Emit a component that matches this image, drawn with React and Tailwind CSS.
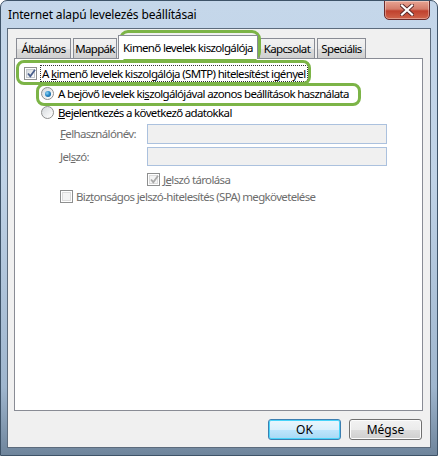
import React from "react";

const FONT = { fontFamily: '"Noto Sans", "Open Sans", sans-serif' };

function CheckBox({ checked, disabled }) {
  return (
    <span className="relative inline-block w-[13px] h-[13px] shrink-0 border border-[#8e8f8f] bg-white">
      <span
        className={
          "absolute inset-[1px] border " +
          (disabled
            ? "border-[#dcdcdc] bg-[#f4f4f4]"
            : "border-[#c3c8ce] bg-[linear-gradient(135deg,#d6dade_0%,#f3f4f5_70%,#ffffff_100%)]")
        }
      />
      {checked && (
        <svg className="absolute left-[1px] top-[0px]" width="11" height="11" viewBox="0 0 11 11">
          <path
            d="M2 5.5 L4.3 8.2 L9 1.8"
            fill="none"
            stroke={disabled ? "#a9a9a9" : "#4a5f8c"}
            strokeWidth="1.8"
            strokeLinejoin="miter"
          />
        </svg>
      )}
    </span>
  );
}

function Radio({ checked }) {
  return (
    <span className="relative inline-block w-[13px] h-[13px] shrink-0 rounded-full border border-[#8e8f8f] bg-[linear-gradient(135deg,#d4d8dc_0%,#f4f5f6_70%,#ffffff_100%)]">
      {checked && (
        <span className="absolute left-[2.5px] top-[2.5px] w-[6px] h-[6px] rounded-full bg-[radial-gradient(circle_at_35%_35%,#8fd3f5_0%,#2a8bc8_45%,#0c4d86_100%)]" />
      )}
    </span>
  );
}

function Tab({ children, selected, w }) {
  if (selected) {
    return (
      <div
        className={
          "relative z-10 h-[24px] -mb-[1px] -mx-[1px] flex items-center justify-center whitespace-nowrap bg-white border border-b-0 border-[#898c95] " +
          w
        }
      >
        {children}
      </div>
    );
  }
  return (
    <div
      className={
        "h-[20px] flex items-center justify-center whitespace-nowrap bg-[linear-gradient(180deg,#f2f2f2_0%,#ebebeb_50%,#dddddd_51%,#cfcfcf_100%)] border border-b-0 border-[#898c95] " +
        w
      }
    >
      {children}
    </div>
  );
}

function Button({ children, isDefault }) {
  return (
    <div
      className={
        "w-[73px] h-[21px] rounded-[3px] flex items-center justify-center text-black border " +
        (isDefault
          ? "border-[#3c7fb1] shadow-[inset_0_0_0_1px_#48d4fa] bg-[linear-gradient(180deg,#eaf6fd_0%,#d9f0fc_50%,#bee6fd_51%,#a7d9f5_100%)]"
          : "border-[#707070] shadow-[inset_0_0_0_1px_#fcfcfc] bg-[linear-gradient(180deg,#f2f2f2_0%,#ebebeb_50%,#dddddd_51%,#cfcfcf_100%)]")
      }
    >
      {children}
    </div>
  );
}

export default function App() {
  return (
    <div
      style={FONT}
      className="relative w-[438px] h-[456px] overflow-hidden rounded-t-[7px] border border-[#3e5368] bg-[linear-gradient(180deg,#c5d7ea_0%,#bfd2e6_40%,#9fb6ce_85%,#6f859c_100%)] text-[11.5px] tracking-[-0.65px] leading-none text-black whitespace-nowrap"
    >
      {/* title bar */}
      <div className="h-[27px] flex items-center pl-[7px] text-[12px] tracking-[-0.15px] text-black">
        Internet alapú levelezés beállításai
      </div>

      {/* close button */}
      <div className="absolute right-[7px] top-[-1px] w-[46px] h-[20px] rounded-b-[5px] border border-[#6b2b2b] bg-[linear-gradient(180deg,#e8a493_0%,#d47c6a_45%,#c0412e_55%,#d0644b_100%)] flex items-center justify-center shadow-[inset_0_0_0_1px_rgba(255,255,255,0.35)]">
        <svg width="14" height="12" viewBox="0 0 14 12">
          <path d="M2 1.5 L12 10.5 M12 1.5 L2 10.5" stroke="#5a2a2a" strokeWidth="4" strokeLinecap="square" />
          <path d="M2 1.5 L12 10.5 M12 1.5 L2 10.5" stroke="#ffffff" strokeWidth="2.2" strokeLinecap="square" />
        </svg>
      </div>

      {/* client area */}
      <div className="mx-[6px] h-[420px] border border-[#5c6b7c] bg-[#f0f0f0] pt-[5px] pl-[6px] pr-[7px] flex flex-col">
        {/* tabs */}
        <div className="flex items-end h-[24px] pl-[2px] gap-[2px]">
          <Tab w="w-[55px]">Általános</Tab>
          <Tab w="w-[44px]">Mappák</Tab>
          <Tab selected w="w-[140px]">Kimenő levelek kiszolgálója</Tab>
          <Tab w="w-[56px]">Kapcsolat</Tab>
          <Tab w="w-[49px]">Speciális</Tab>
        </div>

        {/* panel */}
        <div className="h-[353px] border border-[#898c95] bg-white pl-[9px] pt-[8px]">
          <div className="flex items-center h-[13px]">
            <CheckBox checked />
            <span className="ml-[3px] px-[1px] py-[2px] border border-dotted border-[#333]">
              A <u>k</u>imenő levelek kiszolgálója (SMTP) hitelesítést igényel
            </span>
          </div>
          <div className="flex items-center h-[13px] mt-[7px] ml-[17px]">
            <Radio checked />
            <span className="ml-[4px]">
              A bejövő levelek ki<u>s</u>zolgálójával azonos beállítások használata
            </span>
          </div>
          <div className="flex items-center h-[13px] mt-[6px] ml-[17px]">
            <Radio />
            <span className="ml-[4px]">
              <u>B</u>ejelentkezés a következő adatokkal
            </span>
          </div>

          <div className="ml-[36px] mt-[5px] text-[#6d6d6d]">
            <div className="flex items-center h-[20px]">
              <span className="w-[87px]">
                <u>F</u>elhasználónév:
              </span>
              <div className="w-[240px] h-[20px] border border-[#abc1de] bg-[#f0f0f0]" />
            </div>
            <div className="flex items-center h-[19px] mt-[3px]">
              <span className="w-[87px]">
                Jel<u>s</u>zó:
              </span>
              <div className="w-[240px] h-[19px] border border-[#abc1de] bg-[#f0f0f0]" />
            </div>
            <div className="flex items-center h-[13px] mt-[7px] ml-[87px]">
              <CheckBox checked disabled />
              <span className="ml-[3px]">
                J<u>e</u>lszó tárolása
              </span>
            </div>
            <div className="flex items-center h-[13px] mt-[4px]">
              <CheckBox disabled />
              <span className="ml-[3px]">
                Biz<u>t</u>onságos jelszó-hitelesítés (SPA) megkövetelése
              </span>
            </div>
          </div>
        </div>

        {/* buttons */}
        <div className="flex justify-end gap-[8px] mt-[8px] pr-[1px] tracking-normal text-[12px]">
          <Button isDefault>OK</Button>
          <Button>Mégse</Button>
        </div>
      </div>

      {/* green highlight outlines (annotation overlays) */}
      <div className="absolute left-[118px] top-[29px] w-[142px] h-[31px] rounded-[9px] border-[3px] border-[#7cb447] pointer-events-none" />
      <div className="absolute left-[15px] top-[59px] w-[295px] h-[25px] rounded-[8px] border-[3px] border-[#7cb447] pointer-events-none" />
      <div className="absolute left-[35px] top-[82px] w-[325px] h-[23px] rounded-[8px] border-[3px] border-[#7cb447] pointer-events-none" />
    </div>
  );
}
